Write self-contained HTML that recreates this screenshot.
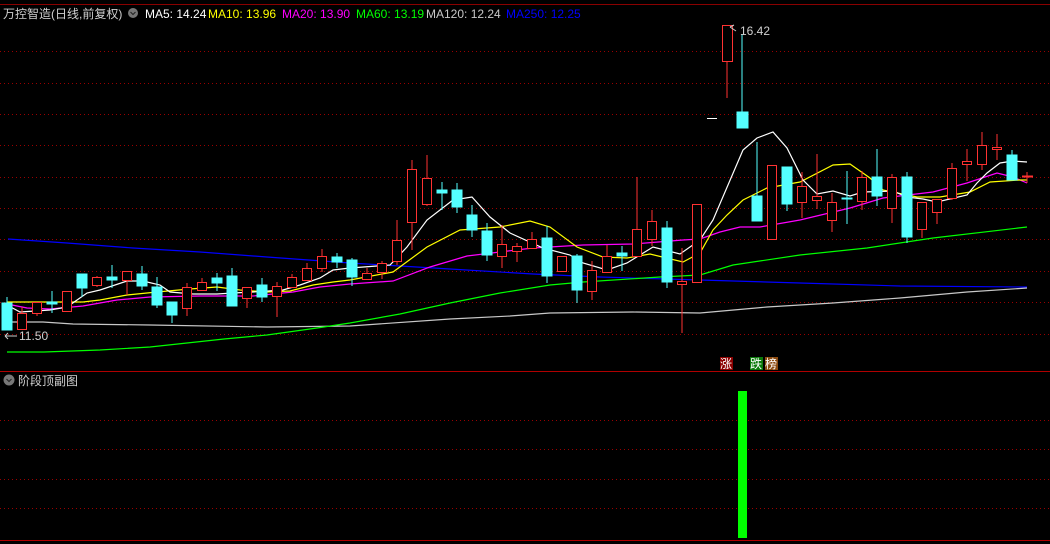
<!DOCTYPE html>
<html><head><meta charset="utf-8"><style>
html,body{margin:0;padding:0;background:#000;width:1050px;height:544px;overflow:hidden}
svg{display:block}
text{font-family:"Liberation Sans","Noto Sans CJK SC",sans-serif;font-size:12px}
</style></head><body>
<svg width="1050" height="544" viewBox="0 0 1050 544" xmlns="http://www.w3.org/2000/svg">
<rect width="1050" height="544" fill="#000"/>
<line x1="0" y1="4.5" x2="1050" y2="4.5" stroke="#8a0000"/>
<g stroke="#9a0000" stroke-dasharray="1,3">
<line x1="0" y1="51.5" x2="1050" y2="51.5"/><line x1="0" y1="83.5" x2="1050" y2="83.5"/>
<line x1="0" y1="114.5" x2="1050" y2="114.5"/><line x1="0" y1="145.5" x2="1050" y2="145.5"/>
<line x1="0" y1="177.5" x2="1050" y2="177.5"/><line x1="0" y1="208.5" x2="1050" y2="208.5"/>
<line x1="0" y1="239.5" x2="1050" y2="239.5"/><line x1="0" y1="271.5" x2="1050" y2="271.5"/>
<line x1="0" y1="302.5" x2="1050" y2="302.5"/><line x1="0" y1="334.5" x2="1050" y2="334.5"/>
<line x1="0" y1="420.5" x2="1050" y2="420.5"/><line x1="0" y1="449.5" x2="1050" y2="449.5"/>
<line x1="0" y1="479.5" x2="1050" y2="479.5"/><line x1="0" y1="508.5" x2="1050" y2="508.5"/>
</g>
<line x1="0" y1="371.5" x2="1050" y2="371.5" stroke="#b00000"/>
<line x1="0" y1="540.5" x2="1050" y2="540.5" stroke="#b00000"/>

<g fill="none" stroke-width="1.2">
<polyline stroke="#0000ff" points="8,239 67,243 133,248 200,252 267,257 350,263 450,269 533,274 600,277 700,280 800,283 900,286 1027,287"/>
<polyline stroke="#c8c8c8" points="7,322 43,322 73,324 150,325 267,327 350,326 450,319 510,316 550,313 633,312 700,313 767,307 833,303 900,298 967,292 1027,288"/>
<polyline stroke="#00ff00" points="7,352 44,352 100,350 150,347 224,339 267,335 317,328 350,323 400,314 450,303 500,293 550,285 583,282 660,277 700,275 733,265 800,255 867,248 933,238 1027,227"/>
<polyline stroke="#ff00ff" points="7,304 27,308 50,309 83,306 117,300 150,297 200,296 253,296 293,292 320,287 350,284 393,281 430,267 467,256 500,252 533,248 583,245 633,244 683,240 700,239 720,232 740,227 760,227 800,220 850,208 883,198 933,192 967,183 997,173 1013,177 1027,183"/>
<polyline stroke="#ffff00" points="7,302 43,302 83,302 100,300 127,295 157,292 190,289 217,287 240,290 267,292 290,291 313,285 333,282 350,280 393,272 427,247 460,230 500,227 530,221 550,227 577,247 603,257 627,258 650,254 683,262 700,253 713,230 727,215 743,200 767,188 800,182 833,165 850,164 870,178 883,190 917,197 940,197 970,192 990,182 1020,180 1027,180"/>
<polyline stroke="#ffffff" points="7,305 20,312 50,310 67,307 87,293 100,290 127,281 143,281 160,285 170,292 193,294 217,294 233,293 253,292 283,290 300,285 320,278 333,270 350,268 390,265 407,247 427,220 453,200 472,197 490,217 510,233 543,248 570,255 583,263 607,270 627,263 653,247 680,254 700,240 713,220 743,150 757,138 773,132 787,148 803,180 817,194 833,191 850,196 863,192 893,191 907,197 923,199 937,202 967,195 977,183 987,173 1000,163 1013,161 1027,162"/>
</g>

<g stroke-width="1">
<g stroke="#54ffff" fill="#54ffff">
<line x1="7" y1="297" x2="7" y2="330"/><rect x="2" y="303" width="10" height="27"/>
<line x1="52" y1="291" x2="52" y2="313"/><rect x="47" y="302" width="10" height="2"/>
<line x1="82" y1="274" x2="82" y2="297"/><rect x="77" y="274" width="10" height="14"/>
<line x1="112" y1="265" x2="112" y2="288"/><rect x="107" y="277" width="10" height="3"/>
<line x1="142" y1="266" x2="142" y2="290"/><rect x="137" y="274" width="10" height="12"/>
<line x1="157" y1="277" x2="157" y2="308"/><rect x="152" y="287" width="10" height="18"/>
<line x1="172" y1="302" x2="172" y2="323"/><rect x="167" y="302" width="10" height="13"/>
<line x1="217" y1="273" x2="217" y2="291"/><rect x="212" y="278" width="10" height="5"/>
<line x1="232" y1="268" x2="232" y2="306"/><rect x="227" y="276" width="10" height="30"/>
<line x1="262" y1="278" x2="262" y2="302"/><rect x="257" y="285" width="10" height="12"/>
<line x1="337" y1="253" x2="337" y2="268"/><rect x="332" y="257" width="10" height="5"/>
<line x1="352" y1="258" x2="352" y2="286"/><rect x="347" y="260" width="10" height="17"/>
<line x1="442" y1="182" x2="442" y2="210"/><rect x="437" y="190" width="10" height="3"/>
<line x1="457" y1="183" x2="457" y2="213"/><rect x="452" y="190" width="10" height="17"/>
<line x1="472" y1="205" x2="472" y2="237"/><rect x="467" y="215" width="10" height="15"/>
<line x1="487" y1="223" x2="487" y2="261"/><rect x="482" y="231" width="10" height="24"/>
<line x1="547" y1="226" x2="547" y2="283"/><rect x="542" y="238" width="10" height="38"/>
<line x1="577" y1="254" x2="577" y2="303"/><rect x="572" y="256" width="10" height="34"/>
<line x1="622" y1="246" x2="622" y2="271"/><rect x="617" y="253" width="10" height="3"/>
<line x1="667" y1="221" x2="667" y2="288"/><rect x="662" y="228" width="10" height="54"/>
<line x1="742" y1="34" x2="742" y2="128"/><rect x="737" y="112" width="11" height="16"/>
<line x1="757" y1="142" x2="757" y2="221"/><rect x="752" y="196" width="10" height="25"/>
<line x1="787" y1="167" x2="787" y2="211"/><rect x="782" y="167" width="10" height="37"/>
<line x1="847" y1="171" x2="847" y2="224"/><rect x="842" y="198" width="10" height="1"/>
<line x1="877" y1="149" x2="877" y2="206"/><rect x="872" y="177" width="10" height="19"/>
<line x1="907" y1="172" x2="907" y2="243"/><rect x="902" y="177" width="10" height="60"/>
<line x1="1012" y1="150" x2="1012" y2="180"/><rect x="1007" y="155" width="10" height="25"/>
</g>
<g stroke="#ff3232" fill="#000">
<line x1="22" y1="307" x2="22" y2="330"/><rect x="17.5" y="313.5" width="9" height="16"/>
<line x1="37" y1="302" x2="37" y2="316"/><rect x="32.5" y="302.5" width="9" height="11"/>
<line x1="67" y1="291" x2="67" y2="312"/><rect x="62.5" y="291.5" width="9" height="20"/>
<line x1="97" y1="276" x2="97" y2="287"/><rect x="92.5" y="277.5" width="9" height="8"/>
<line x1="127" y1="271" x2="127" y2="295"/><rect x="122.5" y="271.5" width="9" height="9"/>
<line x1="187" y1="283" x2="187" y2="316"/><rect x="182.5" y="287.5" width="9" height="21"/>
<line x1="202" y1="278" x2="202" y2="291"/><rect x="197.5" y="282.5" width="9" height="8"/>
<line x1="247" y1="287" x2="247" y2="308"/><rect x="242.5" y="287.5" width="9" height="11"/>
<line x1="277" y1="282" x2="277" y2="317"/><rect x="272.5" y="286.5" width="9" height="10"/>
<line x1="292" y1="274" x2="292" y2="288"/><rect x="287.5" y="277.5" width="9" height="10"/>
<line x1="307" y1="263" x2="307" y2="281"/><rect x="302.5" y="268.5" width="9" height="12"/>
<line x1="322" y1="249" x2="322" y2="272"/><rect x="317.5" y="256.5" width="9" height="12"/>
<line x1="367" y1="268" x2="367" y2="280"/><rect x="362.5" y="273.5" width="9" height="6"/>
<line x1="382" y1="261" x2="382" y2="279"/><rect x="377.5" y="263.5" width="9" height="9"/>
<line x1="397" y1="220" x2="397" y2="265"/><rect x="392.5" y="240.5" width="9" height="21"/>
<line x1="412" y1="160" x2="412" y2="250"/><rect x="407.5" y="169.5" width="9" height="53"/>
<line x1="427" y1="155" x2="427" y2="206"/><rect x="422.5" y="178.5" width="9" height="26"/>
<line x1="502" y1="225" x2="502" y2="268"/><rect x="497.5" y="244.5" width="9" height="12"/>
<line x1="517" y1="243" x2="517" y2="262"/><rect x="512.5" y="246.5" width="9" height="5"/>
<line x1="532" y1="232" x2="532" y2="249"/><rect x="527.5" y="239.5" width="9" height="9"/>
<line x1="562" y1="256" x2="562" y2="272"/><rect x="557.5" y="256.5" width="9" height="15"/>
<line x1="592" y1="261" x2="592" y2="300"/><rect x="587.5" y="270.5" width="9" height="21"/>
<line x1="607" y1="245" x2="607" y2="273"/><rect x="602.5" y="256.5" width="9" height="16"/>
<line x1="637" y1="177" x2="637" y2="257"/><rect x="632.5" y="229.5" width="9" height="27"/>
<line x1="652" y1="210" x2="652" y2="246"/><rect x="647.5" y="221.5" width="9" height="18"/>
<line x1="682" y1="248" x2="682" y2="333"/><rect x="677.5" y="281.5" width="9" height="3"/>
<rect x="692.5" y="204.5" width="9" height="78"/>
<line x1="727" y1="25" x2="727" y2="98"/><rect x="722.5" y="25.5" width="10" height="36"/>
<rect x="767.5" y="165.5" width="9" height="74"/>
<line x1="802" y1="172" x2="802" y2="218"/><rect x="797.5" y="186.5" width="9" height="16"/>
<line x1="817" y1="154" x2="817" y2="209"/><rect x="812.5" y="196.5" width="9" height="4"/>
<line x1="832" y1="193" x2="832" y2="232"/><rect x="827.5" y="202.5" width="9" height="18"/>
<line x1="862" y1="171" x2="862" y2="210"/><rect x="857.5" y="177.5" width="9" height="24"/>
<line x1="892" y1="174" x2="892" y2="223"/><rect x="887.5" y="177.5" width="9" height="31"/>
<line x1="922" y1="202" x2="922" y2="238"/><rect x="917.5" y="202.5" width="9" height="27"/>
<line x1="937" y1="199" x2="937" y2="224"/><rect x="932.5" y="199.5" width="9" height="13"/>
<line x1="952" y1="163" x2="952" y2="200"/><rect x="947.5" y="168.5" width="9" height="30"/>
<line x1="967" y1="149" x2="967" y2="181"/><rect x="962.5" y="161.5" width="9" height="3"/>
<line x1="982" y1="132" x2="982" y2="170"/><rect x="977.5" y="145.5" width="9" height="19"/>
<line x1="997" y1="134" x2="997" y2="160"/><rect x="992.5" y="147.5" width="9" height="2"/>
<line x1="1027" y1="172" x2="1027" y2="183"/><line x1="1022" y1="176.5" x2="1033" y2="176.5" stroke-width="2"/>
</g>
<line x1="707" y1="118.5" x2="717" y2="118.5" stroke="#fff"/>
</g>

<path d="M730,27 l4,-2 M730,27 l6,4" stroke="#ccc" fill="none"/>
<text x="740" y="35" fill="#d0d0d0">16.42</text>
<path d="M5,336 h12 M5,336 l3,-3 M5,336 l3,3" stroke="#ccc" fill="none"/>
<text x="19" y="340" fill="#d0d0d0">11.50</text>

<text x="3" y="18" fill="#d0d0d0">万控智造(日线,前复权)</text>
<circle cx="133" cy="13" r="5" fill="#777"/>
<path d="M130.5,12 l2.5,2.5 l2.5,-2.5" stroke="#222" fill="none"/>
<text x="145" y="18" fill="#ffffff">MA5: 14.24</text>
<text x="208" y="18" fill="#ffff00">MA10: 13.96</text>
<text x="282" y="18" fill="#ff00ff">MA20: 13.90</text>
<text x="356" y="18" fill="#00ff00">MA60: 13.19</text>
<text x="426" y="18" fill="#c8c8c8">MA120: 12.24</text>
<text x="506" y="18" fill="#0000ff">MA250: 12.25</text>

<circle cx="9" cy="380" r="5.5" fill="#777"/>
<path d="M6.5,379 l2.5,2.5 l2.5,-2.5" stroke="#222" fill="none"/>
<text x="18" y="385" fill="#d0d0d0">阶段顶副图</text>

<rect x="720" y="357" width="13" height="13" fill="#8b0000"/>
<text x="720" y="368" fill="#fff">涨</text>
<rect x="750" y="357" width="13" height="13" fill="#0a7a0a"/>
<text x="750" y="368" fill="#fff">跌</text>
<rect x="765" y="357" width="13" height="13" fill="#8b4a10"/>
<text x="765" y="368" fill="#fff">榜</text>

<rect x="738" y="391" width="9" height="147" fill="#00ff00"/>
</svg>
</body></html>
